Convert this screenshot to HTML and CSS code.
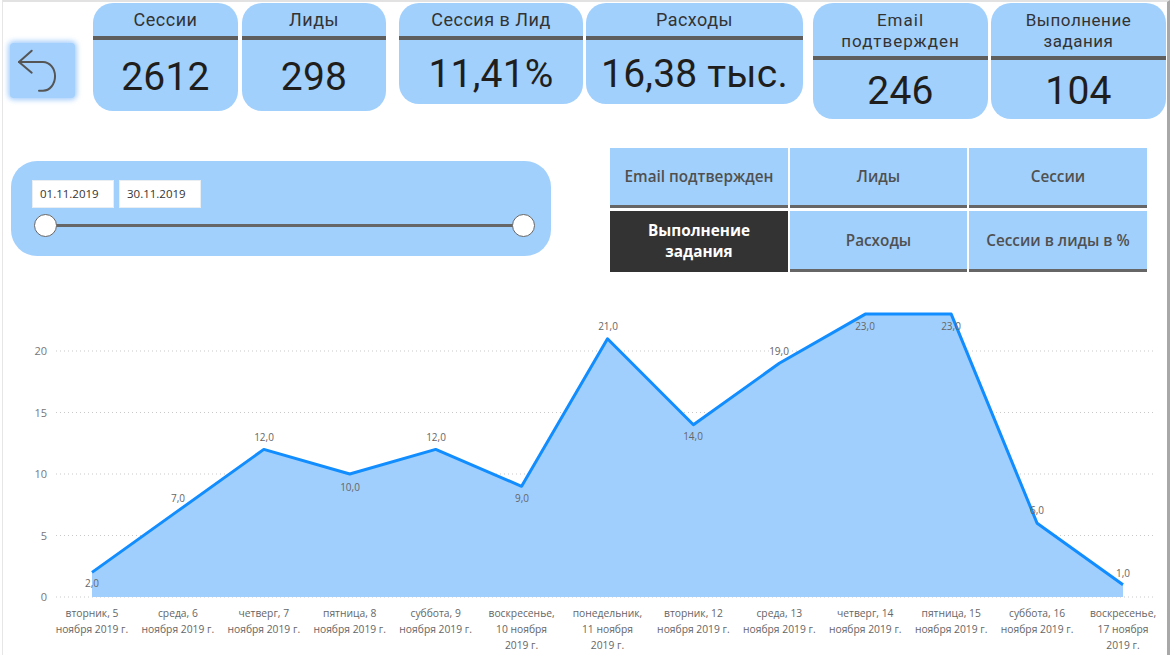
FILE: index.html
```html
<!DOCTYPE html>
<html lang="ru">
<head>
<meta charset="utf-8">
<title>Отчёт</title>
<link rel="stylesheet" href="styles.css">
</head>
<body>
<div class="page">
  <div class="top">
    <button class="back" aria-label="Назад">
      <svg width="65" height="55" viewBox="0 0 65 55">
        <path d="M9 19 H33 A12 14.3 0 0 1 33 47.7 H29" fill="none" stroke="#555" stroke-width="2" stroke-linecap="round"/>
        <path d="M21.7 7.7 L9 19 L21.7 29.7" fill="none" stroke="#555" stroke-width="2" stroke-linecap="round" stroke-linejoin="round"/>
      </svg>
    </button>
    <div class="group g1">
      <div class="kpi k-sess"><div class="kpi-title">Сессии</div><div class="kpi-val">2612</div></div>
      <div class="kpi k-lead"><div class="kpi-title">Лиды</div><div class="kpi-val">298</div></div>
    </div>
    <div class="group g2">
      <div class="kpi k-conv"><div class="kpi-title">Сессия в Лид</div><div class="kpi-val">11,41%</div></div>
      <div class="kpi k-cost"><div class="kpi-title">Расходы</div><div class="kpi-val">16,38 тыс.</div></div>
    </div>
    <div class="group g3">
      <div class="kpi kpi-tall"><div class="kpi-title wide">Email<br>подтвержден</div><div class="kpi-val">246</div></div>
      <div class="kpi kpi-tall"><div class="kpi-title">Выполнение<br>задания</div><div class="kpi-val">104</div></div>
    </div>
  </div>

  <div class="mid">
    <div class="slicer">
      <div class="dates">
        <span class="date">01.11.2019</span>
        <span class="date">30.11.2019</span>
      </div>
      <div class="track">
        <span class="knob"></span>
        <span class="rail"></span>
        <span class="knob"></span>
      </div>
    </div>
    <div class="measures">
      <div class="cell">Email подтвержден</div>
      <div class="cell">Лиды</div>
      <div class="cell">Сессии</div>
      <div class="cell active">Выполнение<br>задания</div>
      <div class="cell">Расходы</div>
      <div class="cell">Сессии в лиды в %</div>
    </div>
  </div>

  <div class="chart">
    <svg class="plot" width="1164" height="315" viewBox="3 290 1164 315">
      <g class="grid">
        <line x1="56" y1="351" x2="1155" y2="351"/>
        <line x1="56" y1="412.5" x2="1155" y2="412.5"/>
        <line x1="56" y1="474" x2="1155" y2="474"/>
        <line x1="56" y1="535.5" x2="1155" y2="535.5"/>
        <line x1="56" y1="597" x2="1155" y2="597"/>
      </g>
      <g class="yticks">
        <text x="47" y="355">20</text>
        <text x="47" y="416.5">15</text>
        <text x="47" y="478">10</text>
        <text x="47" y="539.5">5</text>
        <text x="47" y="601">0</text>
      </g>
      <polygon class="area" points="92,572.4 177.9,510.9 263.8,449.4 349.75,474 435.7,449.4 521.6,486.3 607.5,338.7 693.4,424.8 779.3,363.3 865.25,314.1 951.2,314.1 1037.1,523.2 1123,584.7 1123,597 92,597"/>
      <polyline class="line" points="92,572.4 177.9,510.9 263.8,449.4 349.75,474 435.7,449.4 521.6,486.3 607.5,338.7 693.4,424.8 779.3,363.3 865.25,314.1 951.2,314.1 1037.1,523.2 1123,584.7"/>
      <g class="labels">
        <text x="92" y="587">2,0</text>
        <text x="178" y="502">7,0</text>
        <text x="264" y="441">12,0</text>
        <text x="350" y="491">10,0</text>
        <text x="436" y="441">12,0</text>
        <text x="522" y="502">9,0</text>
        <text x="608" y="330">21,0</text>
        <text x="693" y="440">14,0</text>
        <text x="779" y="355">19,0</text>
        <text x="865" y="330">23,0</text>
        <text x="951" y="330">23,0</text>
        <text x="1037" y="514">6,0</text>
        <text x="1123" y="577">1,0</text>
      </g>
    </svg>
    <div class="xaxis">
      <span>вторник, 5<br>ноября 2019 г.</span>
      <span>среда, 6<br>ноября 2019 г.</span>
      <span>четверг, 7<br>ноября 2019 г.</span>
      <span>пятница, 8<br>ноября 2019 г.</span>
      <span>суббота, 9<br>ноября 2019 г.</span>
      <span>воскресенье,<br>10 ноября<br>2019 г.</span>
      <span>понедельник,<br>11 ноября<br>2019 г.</span>
      <span>вторник, 12<br>ноября 2019 г.</span>
      <span>среда, 13<br>ноября 2019 г.</span>
      <span>четверг, 14<br>ноября 2019 г.</span>
      <span>пятница, 15<br>ноября 2019 г.</span>
      <span>суббота, 16<br>ноября 2019 г.</span>
      <span>воскресенье,<br>17 ноября<br>2019 г.</span>
    </div>
  </div>
</div>
</body>
</html>
```

FILE: styles.css
```css
* { box-sizing: border-box; }

html, body {
  margin: 0;
  padding: 0;
  background: #ffffff;
}

.page {
  width: 1168px;
  height: 655px;
  margin-left: 2px;
  border-top: 2px solid #e2e2e2;
  border-left: 1px solid #e6e6e6;
  border-right: 3px solid #a8a8a8;
  overflow: hidden;
  background: #fff;
}

/* ---------- top KPI row ---------- */
.top {
  display: flex;
  align-items: flex-start;
  padding-top: 1px;
  height: 117px;
}

.back {
  width: 65px;
  height: 55px;
  margin: 40px 0 0 7px;
  padding: 0;
  border: none;
  border-radius: 4px;
  background: #a3d0fc;
  box-shadow: 0 0 5px 2px rgba(110, 175, 250, 0.6);
  display: flex;
}

.group {
  display: flex;
  align-items: flex-start;
}
.g1 { gap: 4px; margin-left: 18px; }
.g2 { gap: 3px; margin-left: 13px; }
.g3 { gap: 3px; margin-left: 10px; }

.kpi {
  display: flex;
  flex-direction: column;
  background: #a1d0fd;
  border-radius: 20px;
  overflow: hidden;
  font-family: Roboto, "Liberation Sans", sans-serif;
  color: #1f1e1d;
}
.k-sess { width: 145px; height: 108px; }
.k-lead { width: 144px; height: 108px; }
.k-conv { width: 184px; height: 101px; }
.k-cost { width: 217px; height: 101px; }
.kpi-tall { width: 175px; height: 116px; }

.kpi-title {
  height: 37px;
  border-bottom: 4px solid #5e5e5e;
  display: flex;
  align-items: center;
  justify-content: center;
  text-align: center;
  font-size: 18px;
  letter-spacing: 0.5px;
  color: #333;
}
.kpi-tall .kpi-title {
  height: 57px;
  font-size: 17px;
  line-height: 21px;
  padding-top: 3px;
}
.kpi-title.wide { letter-spacing: 1px; }

.kpi-val {
  flex: 1;
  display: flex;
  align-items: center;
  justify-content: center;
  padding-top: 3px;
  font-size: 39px;
  font-weight: 400;
  letter-spacing: 0.2px;
}

/* ---------- middle row ---------- */
.mid {
  display: flex;
  align-items: flex-start;
  margin-top: 29px;
}

.slicer {
  width: 540px;
  height: 95px;
  margin: 13px 0 0 8px;
  padding: 19px 16px 0 21px;
  background: #a2d0fd;
  border-radius: 26px;
  font-family: "Open Sans", "Liberation Sans", sans-serif;
}
.dates {
  display: flex;
  gap: 5px;
}
.date {
  width: 82px;
  height: 28px;
  padding-left: 7px;
  background: #fff;
  border: 1px solid #e9eef3;
  font-size: 11.5px;
  line-height: 26px;
  color: #333;
}
.track {
  display: flex;
  align-items: center;
  margin: 6px 0 0 2px;
  width: 501px;
}
.knob {
  flex: none;
  width: 23px;
  height: 23px;
  border-radius: 50%;
  background: #fff;
  border: 1.5px solid #666;
  position: relative;
  z-index: 1;
}
.rail {
  flex: 1;
  height: 3px;
  margin: 0 -1px;
  background: #666;
}

.measures {
  width: 537px;
  margin-left: 59px;
  display: grid;
  grid-template-columns: 178px 177px 178px;
  grid-template-rows: 60px 61px;
  column-gap: 2px;
  row-gap: 3px;
  font-family: "Open Sans", "Liberation Sans", sans-serif;
  font-weight: 600;
  font-size: 15.3px;
  color: #505050;
}
.cell {
  display: flex;
  align-items: center;
  justify-content: center;
  text-align: center;
  line-height: 21px;
  background: #a1d0fd;
  border-bottom: 3px solid #666;
}
.cell.active {
  background: #333333;
  color: #fff;
  font-weight: 700;
  border-bottom: 1px solid #333;
}

/* ---------- chart ---------- */
.chart {
  margin-top: 18px;
}
.plot {
  display: block;
}
.grid line {
  stroke: #c9c9c9;
  stroke-width: 1;
  stroke-dasharray: 1 3;
}
.yticks text {
  font-family: "Open Sans", "Liberation Sans", sans-serif;
  font-size: 11px;
  fill: #777;
  text-anchor: end;
}
.area {
  fill: #a1cffd;
}
.line {
  fill: none;
  stroke: #118dff;
  stroke-width: 3;
  stroke-linejoin: round;
}
.labels text {
  font-family: "Open Sans", "Liberation Sans", sans-serif;
  font-size: 10px;
  fill: #666;
  text-anchor: middle;
}

.xaxis {
  display: grid;
  grid-template-columns: repeat(13, 1fr);
  width: 1117px;
  margin-left: 46px;
  font-family: "Open Sans", "Liberation Sans", sans-serif;
  font-size: 10.3px;
  line-height: 16px;
  color: #666;
  text-align: center;
  white-space: nowrap;
}
```
